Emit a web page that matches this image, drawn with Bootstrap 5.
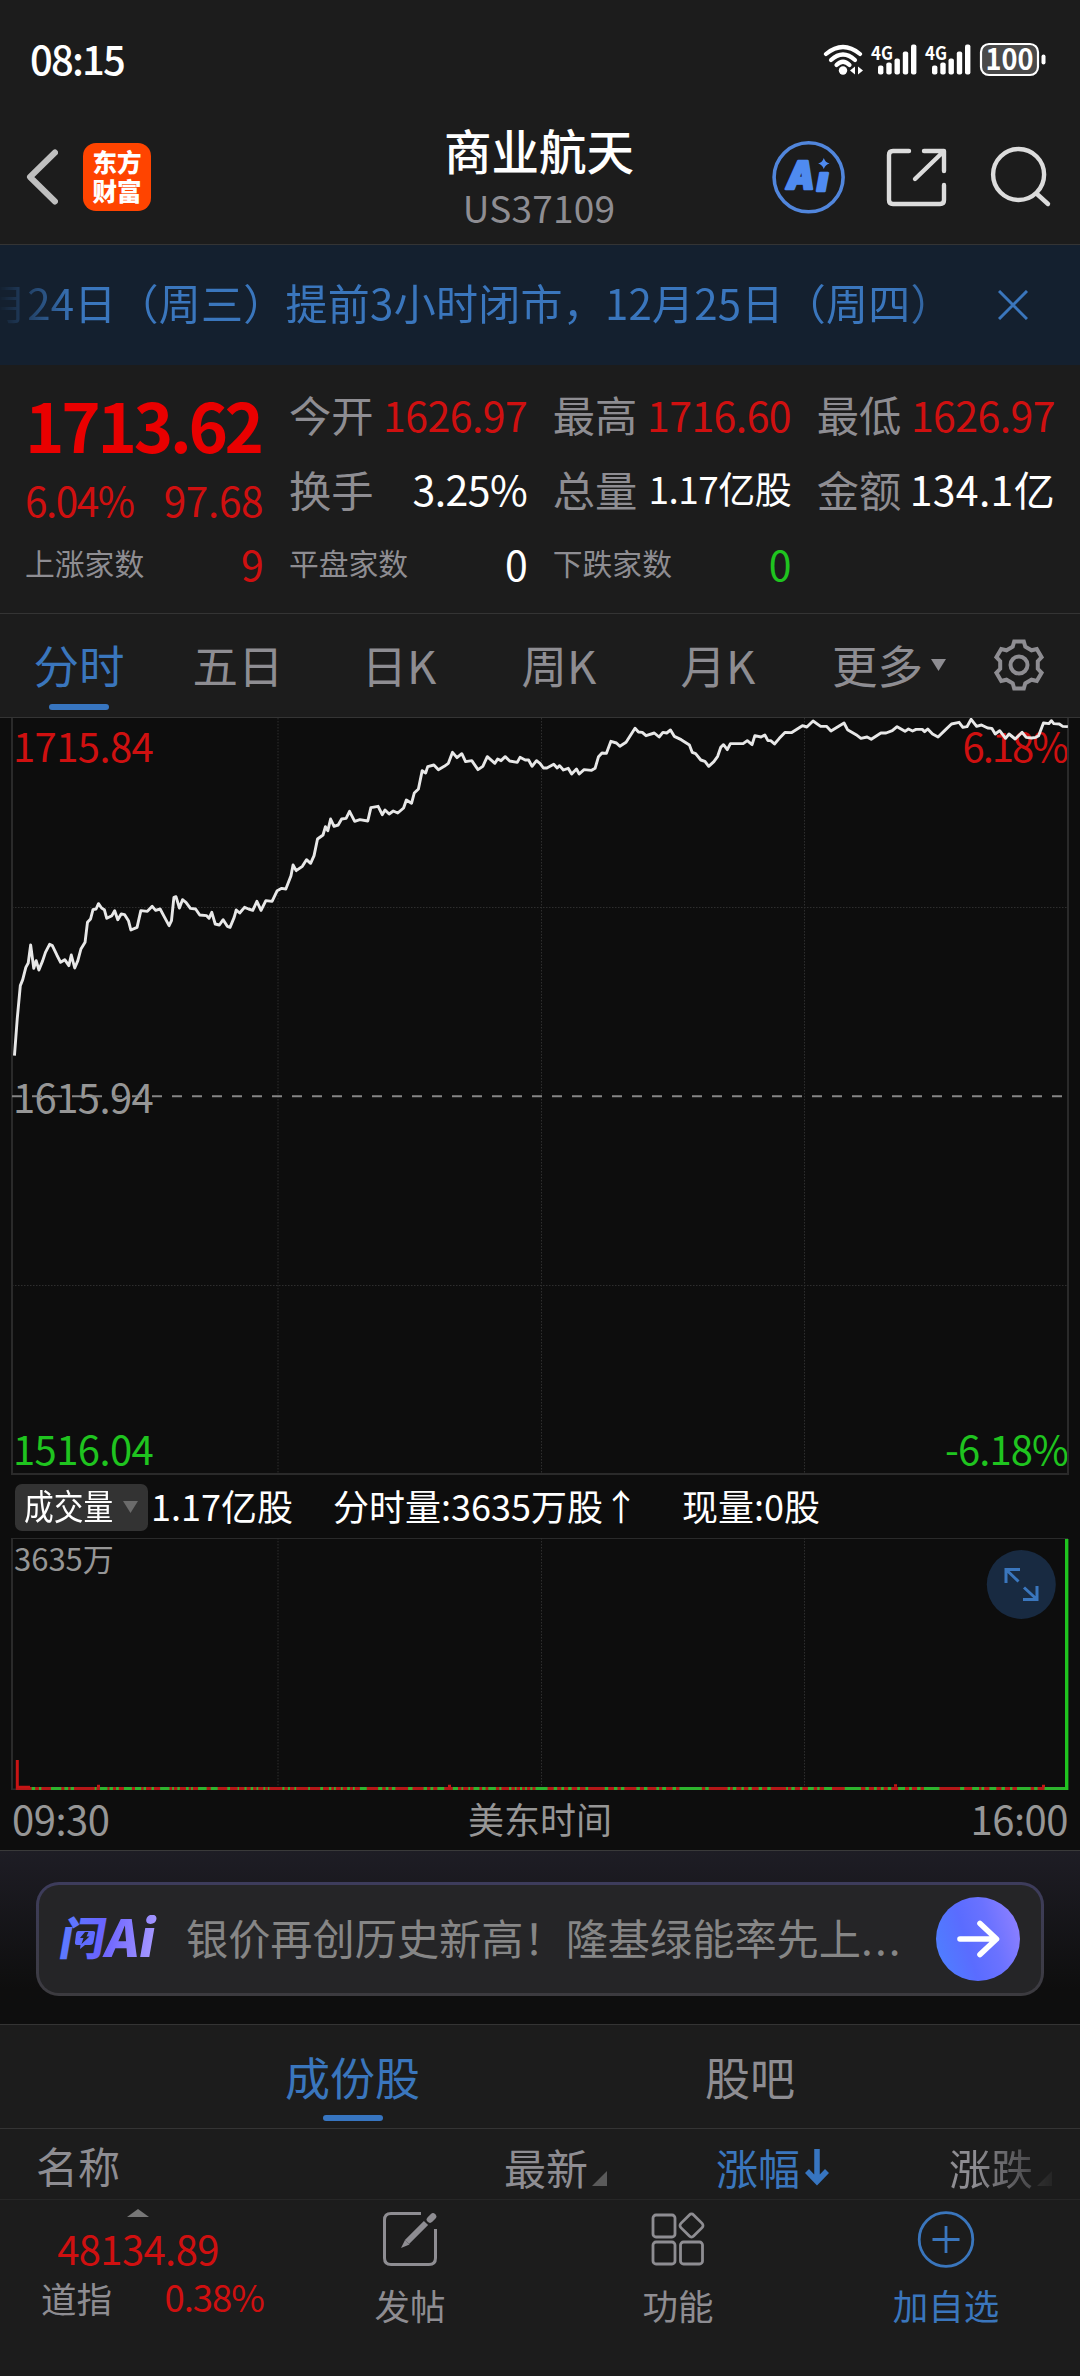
<!DOCTYPE html>
<html lang="zh-CN">
<head>
<meta charset="utf-8">
<meta name="viewport" content="width=device-width, initial-scale=1">
<title>商业航天 US37109</title>
<link href="https://cdn.jsdelivr.net/npm/bootstrap@5.3.0/dist/css/bootstrap.min.css" rel="stylesheet">
<style>
:root{--ink:#8e8d92;--up:#cf1010;--dn:#1fc41f;--bl:#3a76bd;--ln:#343434;--panel:#1c1c1c;--pit:#0d0d0d}
body{margin:0;background:var(--panel);color:var(--ink);font-family:"Noto Sans CJK SC","Noto Sans",sans-serif;line-height:1;overflow-x:hidden}
svg{display:block;flex:none}
.screen{width:1080px;height:2376px;overflow:hidden}
.t-up{color:var(--up)}.t-dn{color:var(--dn)}.t-bl{color:var(--bl)}.t-w{color:#fff}
.statusbar{height:115px;padding:0 32px 0 30px}
.clock{font-size:40px;font-weight:500;letter-spacing:-1.8px}
.topbar{height:130px;border-bottom:1px solid var(--ln);padding:0 28px 0 26px}
.side{width:310px;padding-bottom:5px}
.brand{width:68px;height:68px;border-radius:13px;background:#ff4400;font-size:24.5px;font-weight:900;line-height:29px;margin-left:25px;padding-bottom:3px}
.title{font-size:47.5px;font-weight:500;line-height:56px;margin-top:-7px}
.code{font-size:37px;line-height:48px;padding-top:5px;letter-spacing:.2px}
.notice{height:120px;background:#14202f;padding-right:52px}
.ticker{width:970px;font-size:42px;letter-spacing:.25px;margin-left:-15px;padding-bottom:7px;line-height:60px;-webkit-mask-image:linear-gradient(90deg,transparent 14px,#000 90px,#000 910px,rgba(0,0,0,.6) 970px)}
.quote{height:249px;border-bottom:1px solid var(--ln);padding:12px 25px 0 25px;column-gap:25.6px}
.qcol{width:238.4px}
.qcell{height:74.5px;font-size:41px;letter-spacing:-.55px}
.qcell .lbl{font-size:42.3px;letter-spacing:0}
.qcell .lbl-s{font-size:29.8px;letter-spacing:0}
.last{font-size:67px;font-weight:700;letter-spacing:-3.3px;color:#e90000;height:93px;padding:0}
.last-sub{font-size:40.5px;letter-spacing:-1.5px;height:56px;padding-top:5px}
.last-sub .chg{letter-spacing:-.3px}
.tabs{height:104px;border-bottom:1px solid var(--ln);font-size:45.5px}
.tabitem{position:relative;height:103px;padding-bottom:1px}
.bar{position:absolute;width:60px;height:6px;border-radius:3px;background:#3775c0;bottom:7px;left:50%;margin-left:-30px}
.pit{background:var(--pit)}
.chart{position:relative;height:757px}
.chart svg,.vol svg{position:absolute;left:0;top:0}
.chart .tag{position:absolute;font-size:40px;letter-spacing:-.6px;line-height:40px}
.chart .tag.pc{letter-spacing:-2px;right:13px}
.chart .tag.mn{letter-spacing:-.9px}
.tag.l{left:13px}.tag.r{right:12px}
.tag.one{top:7px}.tag.two{top:358px;color:#969696}.tag.three{top:710px}
.volhead{height:63px;padding:1px 15px 0;font-size:36px}
.picker{width:133px;height:47px;border-radius:7px;background:#333;padding-left:9px}
.squeeze{font-size:35px;display:inline-block;transform:scaleX(.85);transform-origin:0 50%;width:91px;white-space:nowrap;margin-top:-6px}
.volhead .n{letter-spacing:0;margin-top:-5px;white-space:nowrap}
.vol{position:relative;height:252px}
.vol .cap{position:absolute;left:14px;top:3px;font-size:31px;line-height:34px;color:#969696}
.axis{height:60px;padding:0 12px;color:#969696;font-size:36px;padding-bottom:4px}
.axis .d{font-size:40px;letter-spacing:-.5px;width:140px}
.ask{height:175px;border-top:1px solid #3a3a3a;border-bottom:1px solid var(--ln);background:linear-gradient(#1e1d25 0,#0e0e0e 80%);padding:31px 36px 0}
.askbox{height:114px;border-radius:23px;padding:3px;background:linear-gradient(#3d3c5c,#3c3b3f)}
.askin{height:108px;border-radius:20px;background:#252527;padding:0 21px 0 20px}
.hint{font-size:42.2px;color:#868686;white-space:nowrap;margin-left:28px;margin-top:-4px}
.hint .e{letter-spacing:2.2px}
.tabs2{height:104px;border-bottom:1px solid var(--ln);font-size:45px}
.thead{height:71px;border-bottom:1px solid #272727;font-size:42px;padding:0 28px 0 36px}
.c1{width:468px;flex:none;padding-top:1px}.cc{height:70px;white-space:nowrap;flex:none;padding-top:6px}
.foot{font-size:35.5px}
.idx{width:276px;padding-top:9px}
.act{width:268px;padding-top:12px}
.act .cap2{margin-top:20px}
</style>
</head>
<body>
<div class="screen d-flex flex-column">

<header class="statusbar d-flex align-items-center justify-content-between">
  <span class="clock t-w">08:15</span>
  <svg width="226" height="40" viewBox="822 37.500 226 40" fill="#fff">
    <g fill="none" stroke="#fff" stroke-width="4.200" stroke-linecap="round"><path d="M826 53.500Q843 39.500 860 53.500"/><path d="M831 59.500Q843 48.500 855 59.500" /><path d="M836.500 64.500Q843 58 849.500 64.500"/></g>
    <circle cx="843" cy="70" r="4.200"/><path d="M850 70l5-4v8zM863 70l-5-4v8z"/>
    <g id="sig"><text x="871" y="59" font-family="Noto Sans CJK SC,sans-serif" font-size="18.500" font-weight="700" textLength="22" lengthAdjust="spacingAndGlyphs">4G</text>
    <rect x="878" y="65" width="5.400" height="9" rx="2"/><rect x="886.300" y="62" width="5.400" height="12" rx="2"/><rect x="894.500" y="58" width="5.400" height="16" rx="2"/><rect x="902.800" y="51" width="5.400" height="23" rx="2"/><rect x="911" y="44" width="5.400" height="30" rx="2"/></g>
    <use href="#sig" x="54"/>
    <rect x="981" y="43.500" width="57" height="31" rx="8" fill="#4a4a4a" stroke="#fff" stroke-width="2.200"/>
    <rect x="1041.500" y="54" width="4" height="10" rx="2"/>
    <text x="1009.500" y="69.500" text-anchor="middle" font-family="Noto Sans CJK SC,sans-serif" font-size="29" font-weight="700" textLength="48" lengthAdjust="spacingAndGlyphs">100</text>
  </svg>
</header>

<nav class="topbar d-flex align-items-center justify-content-between">
  <div class="side d-flex align-items-center">
    <svg width="32" height="58" viewBox="0 0 32 58" fill="none" stroke="#bfbfbf" stroke-width="6" stroke-linecap="round" stroke-linejoin="round"><path d="M29 4.500L4 29 29 53.500"/></svg>
    <div class="brand t-w d-flex flex-column align-items-center justify-content-center"><span>东方</span><span>财富</span></div>
  </div>
  <div class="text-center">
    <div class="title t-w">商业航天</div>
    <div class="code">US37109</div>
  </div>
  <div class="side d-flex justify-content-end">
    <svg width="282" height="80" viewBox="770 137 282 80" fill="none" stroke="#dcdcdc" stroke-width="4.400" stroke-linecap="round" stroke-linejoin="round">
      <circle cx="808.600" cy="177.300" r="34.500" stroke="#5186dc" stroke-width="3.600"/>
      <g fill="#4f8bf0" stroke="#4f8bf0" stroke-width="2.400" font-family="Inter,Lato,sans-serif" font-weight="900" font-style="italic"><text x="786.500" y="189" font-size="38" textLength="28" lengthAdjust="spacingAndGlyphs">A</text><text x="817" y="191" font-size="33" textLength="11" lengthAdjust="spacingAndGlyphs">ı</text>
      <path stroke="none" d="M823.800 158q1.500 4.500 5.700 5.500-4.200 1-5.700 5.500-1.500-4.500-5.700-5.500 4.200-1 5.700-5.500z"/></g>
      <path d="M909 151H893q-4 0-4 4v45q0 4 4 4h47q4 0 4-4V185M924 151h20v20M943 152L915 179"/>
      <circle cx="1018.600" cy="174.500" r="25.500"/><path d="M1037 194L1048 204"/>
    </svg>
  </div>
</nav>

<div class="notice d-flex align-items-center justify-content-between t-bl">
  <div class="ticker text-nowrap overflow-hidden">月24日（周三）提前3小时闭市，12月25日（周四）</div>
  <svg width="30" height="30" viewBox="0 0 30 30" stroke="#3a76bd" stroke-width="3"><path d="M1 1L29 29M29 1L1 29"/></svg>
</div>

<section class="quote d-flex">
  <div class="qcol">
    <div class="last d-flex align-items-center">1713.62</div>
    <div class="last-sub d-flex align-items-center justify-content-between t-up"><span>6.04%</span><span class="chg">97.68</span></div>
    <div class="qcell d-flex align-items-center justify-content-between"><span class="lbl-s">上涨家数</span><span class="t-up">9</span></div>
  </div>
  <div class="qcol">
    <div class="qcell d-flex align-items-center justify-content-between"><span class="lbl">今开</span><span class="t-up">1626.97</span></div>
    <div class="qcell d-flex align-items-center justify-content-between"><span class="lbl">换手</span><span class="t-w">3.25%</span></div>
    <div class="qcell d-flex align-items-center justify-content-between"><span class="lbl-s">平盘家数</span><span class="t-w">0</span></div>
  </div>
  <div class="qcol">
    <div class="qcell d-flex align-items-center justify-content-between"><span class="lbl">最高</span><span class="t-up">1716.60</span></div>
    <div class="qcell d-flex align-items-center justify-content-between"><span class="lbl">总量</span><span class="t-w" style="font-size:37px">1.17亿股</span></div>
    <div class="qcell d-flex align-items-center justify-content-between"><span class="lbl-s">下跌家数</span><span class="t-dn">0</span></div>
  </div>
  <div class="qcol">
    <div class="qcell d-flex align-items-center justify-content-between"><span class="lbl">最低</span><span class="t-up">1626.97</span></div>
    <div class="qcell d-flex align-items-center justify-content-between"><span class="lbl">金额</span><span class="t-w" style="letter-spacing:.3px">134.1亿</span></div>
  </div>
</section>

<nav class="tabs d-flex">
  <div class="tabitem t-bl d-flex align-items-center justify-content-center" style="width:158px">分时<span class="bar"></span></div>
  <div class="tabitem d-flex align-items-center justify-content-center" style="width:160px">五日</div>
  <div class="tabitem d-flex align-items-center justify-content-center" style="width:162px">日K</div>
  <div class="tabitem d-flex align-items-center justify-content-center" style="width:158px">周K</div>
  <div class="tabitem d-flex align-items-center justify-content-center" style="width:160px">月K</div>
  <div class="tabitem d-flex align-items-center justify-content-center gap-2" style="width:182px">更多<svg width="15" height="12" viewBox="0 0 15 12" fill="#8e8d92"><path d="M0 0H15L7.500 12z"/></svg></div>
  <div class="tabitem d-flex align-items-center justify-content-center flex-fill" style="padding-right:22px">
    <svg width="54" height="54" viewBox="-27 -27 54 54" fill="none" stroke="#8e8d92" stroke-width="4"><circle r="8.500"/><path d="M-4.800-23.500H4.800L6.300-18.300 12.500-14.700 17.800-16 22.600-7.800 18.800-3.800V3.800L22.600 7.800 17.800 16 12.500 14.700 6.300 18.300 4.800 23.500H-4.800L-6.300 18.300-12.500 14.700-17.800 16-22.600 7.800-18.800 3.800V-3.800L-22.600-7.800-17.800-16-12.500-14.700-6.300-18.300z"/></svg>
  </div>
</nav>

<section class="chart pit">
  <span class="tag l one t-up">1715.84</span><span class="tag r pc one t-up">6.18%</span>
  <span class="tag l two">1615.94</span>
  <span class="tag l three t-dn">1516.04</span><span class="tag r mn three t-dn">-6.18%</span>
  <svg width="1080" height="757" viewBox="0 719 1080 757" fill="none">
    <g stroke="#2e2e2e" stroke-dasharray="1.500 1.500"><path d="M278 719V1475M541.500 719V1475M804.500 719V1475M12 908.500H1068M12 1286.500H1068"/></g>
    <path d="M12 719V1475H1068V719" stroke="#2a2a2a" stroke-width="2"/>
    <path d="M12 1097.300H1068" stroke="#858585" stroke-width="2" stroke-dasharray="10 10"/>
    <g transform="translate(0 710) scale(.34437 .33333)"><polyline vector-effect="non-scaling-stroke" stroke="#e8e8e8" stroke-width="2.900" stroke-linejoin="round" points="42,1040 50,930 59,830 66,812 75,775 82,762 89,708 98,778 105,755 113,783 124,755 132,730 144,706 152,710 165,738 176,760 188,752 200,770 207,738 217,777 226,755 235,720 247,700 254,640 263,630 270,602 279,600 286,584 295,597 303,602 310,628 325,620 333,605 342,632 352,615 362,617 373,635 380,663 398,655 409,605 428,607 442,592 452,604 465,600 478,625 491,650 498,635 505,565 511,563 521,597 530,572 540,580 553,598 568,600 580,618 600,620 607,628 615,610 625,645 637,648 648,632 660,652 668,655 680,625 686,603 696,612 710,595 722,600 734,604 746,577 758,604 772,575 790,577 805,545 818,538 830,540 845,500 851,468 860,485 878,472 890,452 902,463 912,440 922,390 938,378 945,353 952,365 960,330 970,352 982,348 992,330 1005,328 1015,307 1030,337 1045,332 1068,336 1077,296 1098,292 1110,317 1118,303 1130,315 1142,306 1155,312 1172,297 1180,273 1195,283 1203,252 1215,240 1226,185 1236,192 1242,173 1260,168 1273,182 1290,172 1302,163 1314,130 1327,146 1341,134 1352,158 1370,155 1388,182 1402,172 1415,143 1437,163 1445,150 1455,155 1467,143 1480,156 1502,160 1510,145 1525,153 1535,153 1545,172 1558,155 1568,163 1578,177 1588,177 1608,166 1618,177 1625,170 1636,183 1650,178 1660,195 1674,180 1682,195 1696,182 1718,184 1728,178 1738,143 1748,132 1761,133 1774,97 1790,102 1800,112 1818,100 1844,58 1854,69 1865,70 1876,80 1900,72 1914,84 1925,70 1936,72 1947,63 1958,82 1978,92 2002,108 2010,130 2020,134 2035,153 2047,157 2058,172 2073,158 2084,142 2093,115 2101,107 2112,122 2121,104 2158,104 2170,95 2184,107 2192,80 2210,84 2221,78 2230,95 2238,95 2249,105 2263,88 2280,70 2298,71 2330,50 2343,54 2361,36 2383,52 2400,52 2413,66 2451,42 2461,62 2486,77 2500,88 2518,84 2530,91 2558,72 2573,72 2591,65 2605,53 2628,67 2638,60 2650,66 2660,61 2678,61 2685,68 2694,60 2708,75 2724,84 2743,65 2763,45 2785,40 2796,55 2808,53 2820,31 2836,52 2850,48 2868,57 2880,58 2890,75 2903,65 2920,88 2930,75 2948,90 2968,70 2980,85 2996,87 3008,85 3016,80 3030,42 3046,44 3053,35 3060,44 3076,45 3086,52 3101,53"/></g>
  </svg>
</section>

<div class="volhead pit t-w d-flex align-items-center">
  <div class="picker d-flex align-items-center"><span class="squeeze">成交量</span><svg class="ms-2" width="15" height="12" viewBox="0 0 15 12" fill="#6b6b6b"><path d="M0 0H15L7.500 12z"/></svg></div>
  <span class="n" style="margin-left:3px;width:182px">1.17亿股</span>
  <span class="n" style="width:349px">分时量:3635万股↑</span>
  <span class="n">现量:0股</span>
</div>

<section class="vol pit">
  <svg width="1080" height="252" viewBox="0 1538 1080 252" fill="none">
    <path d="M12 1538.500H1068" stroke="#2a2a2a"/><path d="M12 1538V1789.500H1068" stroke="#2a2a2a" stroke-width="2"/>
    <path d="M278 1538V1787M541.500 1538V1787M804.500 1538V1787" stroke="#2e2e2e" stroke-dasharray="1.500 1.500"/>
    <path d="M17.300 1760V1790" stroke="#c81414" stroke-width="3"/>
    <path d="M16 1788.500H1068" stroke="#b51717" stroke-width="3"/>
    <path d="M16 1787H30M97 1786H100M448 1786H451M894 1785.500H897M1042 1786H1045" stroke="#c81414" stroke-width="2.500"/>
    <g transform="translate(0 1788.500) scale(.34437 1)"><path stroke="#2eb52e" stroke-width="3" d="M92 0H102M113 0H120M148 0H178M187 0H198M205 0H215M275 0H280M290 0H312M318 0H328M337 0H345M360 0H383M392 0H410M417 0H424M440 0H447M465 0H492M500 0H505M515 0H522M540 0H548M555 0H560M575 0H600M612 0H632M660 0H668M690 0H694M710 0H716M728 0H735M745 0H750M765 0H770M778 0H782M820 0H826M836 0H842M855 0H860M895 0H900M930 0H938M955 0H962M970 0H975M990 0H995M1008 0H1016M1025 0H1030M1045 0H1065M1098 0H1110M1120 0H1128M1138 0H1148M1185 0H1198M1230 0H1240M1250 0H1258M1270 0H1290M1315 0H1330M1340 0H1345M1360 0H1365M1375 0H1392M1400 0H1410M1418 0H1440M1450 0H1456M1478 0H1485M1495 0H1500M1510 0H1516M1525 0H1530M1540 0H1546M1555 0H1590M1608 0H1618M1630 0H1638M1650 0H1660M1676 0H1684M1700 0H1708M1756 0H1766M1783 0H1793M1803 0H1813M1848 0H1858M1870 0H1880M1906 0H1914M1923 0H1934M1953 0H1963M1973 0H2038M2048 0H2058M2113 0H2120M2128 0H2138M2153 0H2160M2173 0H2183M2203 0H2213M2228 0H2238M2283 0H2288M2298 0H2308M2323 0H2330M2346 0H2363M2373 0H2380M2393 0H2416M2453 0H2500M2513 0H2523M2538 0H2546M2558 0H2566M2578 0H2588M2608 0H2628M2640 0H2648M2663 0H2673M2683 0H2728M2788 0H2800M2823 0H2843M2850 0H2858M2873 0H2893M2908 0H2918M2933 0H2940M2953 0H2993M3003 0H3013M3033 0H3093"/></g>
    <path d="M1066.700 1539V1790" stroke="#1fc41f" stroke-width="3.400"/>
    <circle cx="1021.300" cy="1584.500" r="34.500" fill="#182a41"/>
    <path d="M1006 1583V1569.500H1020M1006 1569.500L1018.500 1581.500M1023 1599.500H1037V1586M1037 1599.500L1024 1587.500" stroke="#3a76bd" stroke-width="3"/>
  </svg>
  <span class="cap">3635万</span>
</section>
<div class="axis pit d-flex align-items-center justify-content-between"><span class="d">09:30</span><span>美东时间</span><span class="d text-end">16:00</span></div>

<section class="ask">
  <div class="askbox"><div class="askin d-flex align-items-center">
    <svg width="99" height="48" viewBox="58 1915 99 48">
      <defs><linearGradient id="lg" x1="58" x2="157" y1="0" y2="0" gradientUnits="userSpaceOnUse"><stop stop-color="#5b7cff"/><stop offset=".45" stop-color="#6a62ff"/><stop offset="1" stop-color="#a99bff"/></linearGradient>
      <linearGradient id="lb" x1="0" y1=".6" x2="1" y2=".3"><stop stop-color="#4f7dff"/><stop offset=".35" stop-color="#5a6cff"/><stop offset=".65" stop-color="#6a72ff"/><stop offset="1" stop-color="#8d80ff"/></linearGradient></defs>
      <g fill="url(#lg)" font-family="Noto Sans CJK SC,sans-serif" font-weight="900" transform="translate(342 0) skewX(-10)"><text x="59" y="1955.500" font-size="45" textLength="46" lengthAdjust="spacingAndGlyphs">门</text><text x="105" y="1957.500" font-size="51" textLength="50" lengthAdjust="spacingAndGlyphs">Ai</text></g>
      <path fill="#5f6cff" d="M77 1931H92Q94.500 1931 94 1933.500L92.500 1942Q92 1945 89 1945H84L79 1949 79.500 1945H76Q73.500 1945 74 1942L75 1934Q75.500 1931 77 1931z"/>
      <path fill="#252527" d="M84 1932L79 1938H82.500L80.500 1944 88.500 1936.500H85.500L87.500 1932z"/>
    </svg>
    <div class="hint flex-fill">银价再创历史新高！隆基绿能率先上<span class="e">...</span></div>
    <svg width="84" height="84" viewBox="0 0 84 84"><circle cx="42" cy="42" r="42" fill="url(#lb)"/><path d="M24 42H60M44 26.500L60.500 42 44 57.500" fill="none" stroke="#fff" stroke-width="5.600" stroke-linecap="round" stroke-linejoin="round"/></svg>
  </div></div>
</section>

<nav class="tabs2 d-flex">
  <div class="tabitem t-bl d-flex align-items-center justify-content-center" style="width:705px"><span>成份股</span><span class="bar"></span></div>
  <div class="tabitem d-flex align-items-center justify-content-center" style="width:90px">股吧</div>
</nav>

<div class="thead d-flex align-items-center">
  <span class="c1">名称</span>
  <div class="cc d-flex align-items-center" style="width:212px"><span>最新</span><svg style="margin:23px 0 0 4px" width="15" height="15" viewBox="0 0 15 15" fill="#5a5a5a"><path d="M15 0V15H0z"/></svg></div>
  <div class="cc d-flex align-items-center t-bl" style="width:233px"><span>涨幅</span><svg style="margin:0 0 0 5px" width="24" height="38" viewBox="0 0 24 38" fill="none" stroke="#3775c0" stroke-width="5.500"><path d="M12 1V33M2 23L12 33.500 22 23"/></svg></div>
  <div class="cc d-flex align-items-center" style="width:104px;-webkit-mask-image:linear-gradient(90deg,#000 25%,rgba(0,0,0,.15))"><span>涨跌</span><svg style="margin:23px 0 0 4px" width="15" height="15" viewBox="0 0 15 15" fill="#5a5a5a"><path d="M15 0V15H0z"/></svg></div>
</div>

<footer class="foot d-flex">
  <div class="idx">
    <svg class="mx-auto" width="22" height="8" viewBox="0 0 22 8" fill="#777"><path d="M0 8L11 0 22 8z"/></svg>
    <div class="text-center t-up" style="font-size:40px;letter-spacing:-.6px;margin-top:11px">48134.89</div>
    <div class="d-flex justify-content-between align-items-center" style="padding:11px 12px 0 41px"><span>道指</span><span class="t-up" style="font-size:36.500px;letter-spacing:-1px">0.38%</span></div>
  </div>
  <div class="act d-flex flex-column align-items-center">
    <svg width="54" height="55" viewBox="0 0 54 55" fill="none" stroke="#8e8d92" stroke-width="3"><path d="M38 1.500H8Q1.500 1.500 1.500 8V46Q1.500 52.500 8 52.500H46Q52.500 52.500 52.500 46V17"/><path d="M43 11L24 30" stroke-width="6"/><path d="M47 7.500L50 4.500" stroke-width="6.500" stroke-linecap="round"/><path fill="#8e8d92" stroke="none" d="M22 28l4.500 4.500L18 36z"/></svg>
    <span class="cap2">发帖</span>
  </div>
  <div class="act d-flex flex-column align-items-center">
    <svg width="54" height="55" viewBox="0 0 54 55" fill="none" stroke="#8e8d92" stroke-width="2.800"><rect x="2" y="3" width="22" height="22" rx="3"/><rect x="2" y="30" width="22" height="22" rx="3"/><rect x="29.500" y="30" width="22" height="22" rx="3"/><rect x="31.500" y="4.500" width="18" height="18" rx="3" transform="rotate(45 40.500 13.500)"/></svg>
    <span class="cap2">功能</span>
  </div>
  <div class="act d-flex flex-column align-items-center t-bl">
    <svg width="58" height="55" viewBox="0 0 58 55" overflow="visible" fill="none" stroke="#3a76bd" stroke-width="2.800"><circle cx="29" cy="27.500" r="26.800"/><path d="M15.500 27.500H42.500M29 14V41"/></svg>
    <span class="cap2">加自选</span>
  </div>
</footer>
</div>
<script src="https://cdn.jsdelivr.net/npm/bootstrap@5.3.0/dist/js/bootstrap.bundle.min.js"></script>
</body>
</html>
